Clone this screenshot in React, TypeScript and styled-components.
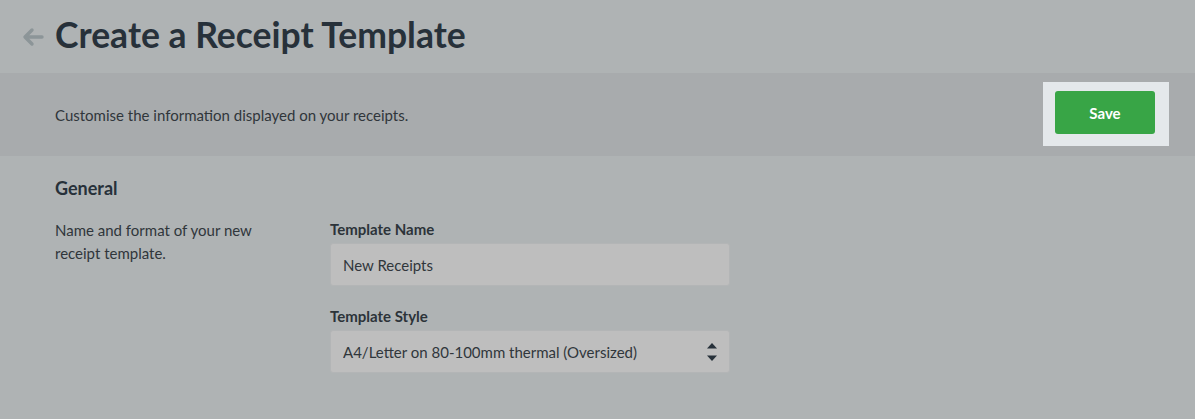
import React from "react";
import styled, { createGlobalStyle } from "styled-components";

const Global = createGlobalStyle`
  html, body { margin: 0; padding: 0; }
  body {
    background: #afb3b4;
    font-family: Lato, "Open Sans", "Liberation Sans", sans-serif;
    color: #2c343b;
  }
`;

const Page = styled.div`
  width: 1195px;
  min-height: 419px;
  background: #afb3b4;
`;

const Header = styled.header`
  height: 73px;
  display: flex;
  align-items: center;
  padding-left: 22px;
  gap: 9px;
  box-sizing: border-box;
`;

const BackLink = styled.a`
  display: flex;
  align-items: center;
  width: 24px;
  height: 24px;
  color: #8c9598;
`;

const Title = styled.h1`
  margin: 0;
  font-size: 35.5px;
  font-weight: 700;
  color: #27313a;
  line-height: 1;
  padding-bottom: 4px;
`;

const Band = styled.div`
  height: 83px;
  background: #a8abad;
  display: flex;
  align-items: center;
  justify-content: space-between;
  padding: 0 26px 0 55px;
`;

const BandText = styled.p`
  margin: 0;
  font-size: 15px;
  color: #30363b;
`;

const Highlight = styled.div`
  background: #e4e8eb;
  padding: 9px 14px 12px 12px;
  margin-top: -1px;
  display: flex;
`;

const SaveButton = styled.button`
  width: 100px;
  height: 43px;
  border: none;
  border-radius: 3px;
  background: #38a546;
  color: #ffffff;
  font-family: Lato, "Liberation Sans", sans-serif;
  font-weight: 700;
  font-size: 15px;
  cursor: pointer;
`;

const Section = styled.section`
  display: grid;
  grid-template-columns: 275px 400px;
  padding: 21px 0 0 55px;
`;

const SectionTitle = styled.h2`
  grid-column: 1 / -1;
  margin: 0 0 16px;
  font-size: 18px;
  font-weight: 700;
  color: #27313a;
  line-height: 22px;
`;

const Description = styled.p`
  margin: 4px 0 0;
  font-size: 15px;
  line-height: 23px;
  color: #30363b;
  width: 215px;
`;

const Fields = styled.div`
  display: flex;
  flex-direction: column;
`;

const Field = styled.div`
  display: flex;
  flex-direction: column;
  margin-bottom: 16px;
`;

const Label = styled.label`
  font-size: 15px;
  font-weight: 700;
  color: #2c3339;
  line-height: 20px;
  margin-bottom: 4px;
  margin-top: 4px;
`;

const Input = styled.input`
  box-sizing: border-box;
  width: 400px;
  height: 43px;
  background: #bebebe;
  border: 1px solid #b3b5b6;
  border-radius: 3px;
  padding: 0 12px;
  font-family: Lato, "Liberation Sans", sans-serif;
  font-size: 15px;
  color: #30363b;
  outline: none;
`;

const SelectWrap = styled.div`
  position: relative;
  width: 400px;
`;

const Select = styled.select`
  appearance: none;
  box-sizing: border-box;
  width: 400px;
  height: 43px;
  background: #bebebe;
  border: 1px solid #b3b5b6;
  border-radius: 3px;
  padding: 0 12px;
  font-family: Lato, "Liberation Sans", sans-serif;
  font-size: 15px;
  color: #30363b;
  outline: none;
`;

const Caret = styled.svg`
  position: absolute;
  right: 12px;
  top: 12px;
  pointer-events: none;
`;

export default function App() {
  return (
    <Page>
      <Global />
      <Header>
        <BackLink href="#">
          <svg width="22" height="20" viewBox="0 0 22 20" fill="none">
            <path
              d="M20 10H4M10 3L3 10l7 7"
              stroke="#8c9598"
              strokeWidth="3.4"
              strokeLinecap="round"
              strokeLinejoin="round"
            />
          </svg>
        </BackLink>
        <Title>Create a Receipt Template</Title>
      </Header>
      <Band>
        <BandText>Customise the information displayed on your receipts.</BandText>
        <Highlight>
          <SaveButton>Save</SaveButton>
        </Highlight>
      </Band>
      <Section>
        <SectionTitle>General</SectionTitle>
        <Description>Name and format of your new receipt template.</Description>
        <Fields>
          <Field>
            <Label>Template Name</Label>
            <Input defaultValue="New Receipts" />
          </Field>
          <Field>
            <Label>Template Style</Label>
            <SelectWrap>
              <Select defaultValue="a4">
                <option value="a4">A4/Letter on 80-100mm thermal (Oversized)</option>
              </Select>
              <Caret width="12" height="20" viewBox="0 0 12 20">
                <path d="M6 1L11 6.5H1Z" fill="#27313a" />
                <path d="M6 19L11 13.5H1Z" fill="#27313a" />
              </Caret>
            </SelectWrap>
          </Field>
        </Fields>
      </Section>
    </Page>
  );
}
